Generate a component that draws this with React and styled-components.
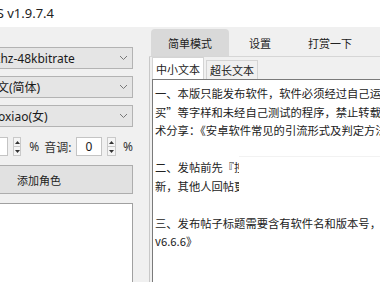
import React from 'react';
import styled, { createGlobalStyle } from 'styled-components';

const Global = createGlobalStyle`
  html, body {
    margin: 0;
    padding: 0;
    background: #f0f0f0;
  }
  * {
    box-sizing: border-box;
  }
`

const Window = styled.div`
  width: 380px;
  height: 282px;
  overflow: hidden;
  display: flex;
  flex-direction: column;
  font-family: "Noto Sans", "Noto Sans CJK SC", sans-serif;
  font-size: 12px;
  color: #1a1a1a;
  position: relative;
`

const TitleBar = styled.div`
  height: 27px;
  flex: none;
  background: #fff;
  display: flex;
  align-items: center;
  padding-bottom: 2px;
  font-size: 13px;
  color: #222;
  white-space: nowrap;
`

const TitleText = styled.span`
  margin-left: -18px;
`

const Body = styled.div`
  flex: 1;
  display: flex;
  min-height: 0;
`

const LeftPanel = styled.div`
  width: 134px;
  flex: none;
  display: flex;
  flex-direction: column;
  padding-top: 20px;
  padding-right: 1px;
`

const Combo = styled.div`
  height: 22px;
  margin-bottom: 7px;
  background: #e5e5e5;
  border: 1px solid #b3b3b3;
  border-left: none;
  display: flex;
  align-items: center;
  justify-content: space-between;
  padding-right: 4px;
  overflow: hidden;
  white-space: nowrap;
`

const ComboLabel = styled.span`
  margin-left: ${p => p.$shift}px;
`

const Chevron = () => (
  <svg width="9" height="6" viewBox="0 0 9 6">
    <path d="M1 1 L4.5 4.5 L8 1" fill="none" stroke="#777" strokeWidth="1" />
  </svg>
)

const SpinRow = styled.div`
  height: 21px;
  margin-top: 2px;
  display: flex;
  align-items: center;
  white-space: nowrap;
`

const NumBox = styled.div`
  width: ${p => p.$w}px;
  height: 19px;
  background: #fff;
  border: 1px solid #c4c4c4;
  border-left: ${p => (p.$open ? 'none' : '1px solid #c4c4c4')};
  display: flex;
  align-items: center;
  justify-content: center;
  margin-left: ${p => p.$ml || 0}px;
`

const Spinner = styled.div`
  width: 9px;
  height: 19px;
  margin-left: 5px;
  display: flex;
  flex-direction: column;
  border: 1px solid #c9c9c9;
  background: #f5f5f5;
`

const SpinHalf = styled.div`
  flex: 1;
  display: flex;
  align-items: center;
  justify-content: center;
  border-bottom: ${p => (p.$top ? '1px solid #c9c9c9' : 'none')};
`

const Arrow = ({ up }) => (
  <svg width="5" height="3" viewBox="0 0 5 3">
    <path d={up ? 'M0 3 L2.5 0 L5 3 Z' : 'M0 0 L2.5 3 L5 0 Z'} fill="#333" />
  </svg>
)

const Unit = styled.span`
  margin-left: ${p => p.$ml}px;
  font-size: 12px;
  color: #333;
`

const AddButton = styled.div`
  height: 29px;
  margin-top: 8px;
  background: #e1e1e1;
  border: 1px solid #adadad;
  border-left: none;
  display: flex;
  align-items: center;
  padding-left: 17px;
  font-size: 11px;
  color: #222;
`

const ListBox = styled.div`
  flex: 1;
  margin-top: 9px;
  background: #fff;
  border-top: 1px solid #a0a0a0;
  border-right: 1px solid #a0a0a0;
`

const RightPanel = styled.div`
  flex: 1;
  margin-left: 15px;
  display: flex;
  flex-direction: column;
  min-width: 0;
`

const TabStrip = styled.div`
  height: 30px;
  flex: none;
  display: flex;
  align-items: flex-end;
  gap: 3px;
  padding-left: 2px;
  border-bottom: 1px solid #d6d6d6;
`

const Tab = styled.div`
  height: 27px;
  padding: 0 17px;
  display: flex;
  align-items: center;
  font-size: 11px;
  color: #222;
  border-radius: 4px 4px 0 0;
  background: ${p => (p.$active ? '#d9d9d9' : 'transparent')};
  white-space: nowrap;
`

const TabPage = styled.div`
  flex: 1;
  display: flex;
  flex-direction: column;
  border-left: 1px solid #c8c8c8;
  padding-left: 2px;
  min-height: 0;
`

const SubTabs = styled.div`
  height: 22px;
  flex: none;
  display: flex;
  align-items: flex-end;
  gap: 2px;
`

const SubTab = styled.div`
  height: ${p => (p.$active ? 22 : 19)}px;
  padding: 0 3px;
  display: flex;
  align-items: center;
  font-size: 11px;
  color: #222;
  background: ${p => (p.$active ? '#fff' : '#f0f0f0')};
  border: 1px solid #d4d4d4;
  border-bottom: none;
  white-space: nowrap;
`

const TextArea = styled.div`
  flex: 1;
  background: #fff;
  border-top: 1px solid #7a7a7a;
  border-left: 1px solid #7a7a7a;
  padding: 4px 0 0 2px;
  overflow: hidden;
  font-family: "Noto Sans CJK SC", sans-serif;
  font-size: 11.3px;
  line-height: 18.5px;
  color: #222;
`

const Line = styled.div`
  white-space: nowrap;
  height: 18.5px;
`

const Overlay = styled.div`
  position: absolute;
  left: 239px;
  top: 156px;
  width: 150px;
  height: 48px;
  background: #fff;
  border-top: 1px solid #f2f2f2;
`

const lines = [
  '一、本版只能发布软件，软件必须经过自己运行测试，禁止发布带有“破解”、“购',
  '买”等字样和未经自己测试的程序，禁止转载他人作品，详细规则请阅读：技',
  '术分享：《安卓软件常见的引流形式及判定方法》',
  '',
  '二、发帖前先『搜索』，确认没有重复后再发布，同一软件只允许一个帖子更',
  '新，其他人回帖更新版本',
  '',
  '三、发布帖子标题需要含有软件名和版本号，参考格式：《软件名',
  'v6.6.6》',
]

function App() {
  return (
    <Window>
      <Global />
      <TitleBar>
        <TitleText>TTS v1.9.7.4</TitleText>
      </TitleBar>
      <Body>
        <LeftPanel>
          <Combo>
            <ComboLabel $shift={-6}>khz-48kbitrate</ComboLabel>
            <Chevron />
          </Combo>
          <Combo>
            <ComboLabel $shift={-3}>文(简体)</ComboLabel>
            <Chevron />
          </Combo>
          <Combo>
            <ComboLabel $shift={-2}>oxiao(女)</ComboLabel>
            <Chevron />
          </Combo>
          <SpinRow>
            <NumBox $w={8} $open />
            <Spinner>
              <SpinHalf $top><Arrow up /></SpinHalf>
              <SpinHalf><Arrow /></SpinHalf>
            </Spinner>
            <Unit $ml={8}>%</Unit>
            <Unit $ml={5}>音调:</Unit>
            <NumBox $w={28} $ml={4}>0</NumBox>
            <Spinner>
              <SpinHalf $top><Arrow up /></SpinHalf>
              <SpinHalf><Arrow /></SpinHalf>
            </Spinner>
            <Unit $ml={7}>%</Unit>
          </SpinRow>
          <AddButton>添加角色</AddButton>
          <ListBox />
        </LeftPanel>
        <RightPanel>
          <TabStrip>
            <Tab $active>简单模式</Tab>
            <Tab>设置</Tab>
            <Tab>打赏一下</Tab>
          </TabStrip>
          <TabPage>
            <SubTabs>
              <SubTab $active>中小文本</SubTab>
              <SubTab>超长文本</SubTab>
            </SubTabs>
            <TextArea>
              {lines.map((l, i) => (
                <Line key={i}>{l}</Line>
              ))}
            </TextArea>
          </TabPage>
        </RightPanel>
      </Body>
      <Overlay />
    </Window>
  );
}

export default App;
